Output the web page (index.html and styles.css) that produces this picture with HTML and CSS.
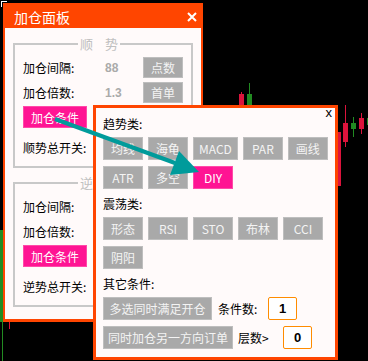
FILE: index.html
```html
<!DOCTYPE html>
<html lang="zh-CN">
<head>
    <meta charset="UTF-8">
    <title>加仓面板</title>
    <link rel="stylesheet" href="styles.css">
</head>
<body>
    <!-- 背景K线 -->
    <div class="chart">
        <i class="corner"></i>
        <i class="wick red" style="left:241px;top:92px;height:14px"></i>
        <i class="bar red" style="left:239px;top:94px;height:12px"></i>
        <i class="wick green" style="left:249px;top:83px;height:23px"></i>
        <i class="bar green" style="left:247px;top:94px;height:12px"></i>
        <i class="bar red" style="left:336px;top:132px;height:54px"></i>
        <i class="wick red" style="left:345px;top:105px;height:42px"></i>
        <i class="bar red" style="left:343px;top:123px;height:19px"></i>
        <i class="wick green" style="left:353px;top:117px;height:20px"></i>
        <i class="bar green" style="left:351px;top:123px;height:6px"></i>
        <i class="wick red" style="left:361px;top:113px;height:21px"></i>
        <i class="bar red" style="left:359px;top:118px;height:11px"></i>
        <i class="bar green" style="left:367px;top:118px;height:7px"></i>
        <i class="bar green" style="left:0;top:230px;height:92px;width:3px"></i>
        <i class="wick green" style="left:2px;top:230px;height:131px"></i>
        <i class="wick red" style="left:9px;top:322px;height:7px"></i>
    </div>

    <div class="panel">
        <div class="head">
            <span>加仓面板</span>
            <svg width="10" height="10" viewBox="0 0 10 10"><path d="M1 1L9 9M9 1L1 9" stroke="#fff" stroke-width="2"/></svg>
        </div>
        <div class="main">
            <div class="group">
                <div class="legend"><span>顺</span><span>势</span></div>
                <div class="row"><span class="label">加仓间隔:</span><span class="val">88</span><span class="btn">点数</span></div>
                <div class="row"><span class="label">加仓倍数:</span><span class="val">1.3</span><span class="btn">首单</span></div>
                <div class="btn pink add">加仓条件</div>
                <div class="switch">顺势总开关:</div>
            </div>
            <div class="group">
                <div class="legend"><span>逆</span><span>势</span></div>
                <div class="row"><span class="label">加仓间隔:</span></div>
                <div class="row"><span class="label">加仓倍数:</span></div>
                <div class="btn pink add">加仓条件</div>
                <div class="switch">逆势总开关:</div>
            </div>
        </div>
    </div>

    <!-- 条件弹窗 -->
    <div class="pop">
        <span class="close">x</span>
        <div class="title">趋势类:</div>
        <div class="btns">
            <span class="btn">均线</span><span class="btn">海龟</span><span class="btn">MACD</span><span class="btn">PAR</span><span class="btn">画线</span>
        </div>
        <div class="btns">
            <span class="btn">ATR</span><span class="btn">多空</span><span class="btn pink">DIY</span>
        </div>
        <div class="title">震荡类:</div>
        <div class="btns">
            <span class="btn">形态</span><span class="btn">RSI</span><span class="btn">STO</span><span class="btn">布林</span><span class="btn">CCI</span>
        </div>
        <div class="btns">
            <span class="btn">阴阳</span>
        </div>
        <div class="title">其它条件:</div>
        <div class="btns">
            <span class="btn multi">多选同时满足开仓</span><span class="field">条件数:</span><span class="num">1</span>
        </div>
        <div class="btns">
            <span class="btn both">同时加仓另一方向订单</span><span class="field layer">层数&gt;</span><span class="num">0</span>
        </div>
    </div>

    <svg class="arrow" width="368" height="361">
        <line x1="55" y1="119" x2="175" y2="163" stroke="#009b9b" stroke-width="4"/>
        <polygon points="199,172 170,175 179,151" fill="#009b9b"/>
    </svg>
</body>
</html>
```

FILE: styles.css
```css
*{
    box-sizing:border-box;
}
body{
    margin:0;
    padding:3px 0 0 3px;
    width:368px;
    height:361px;
    overflow:hidden;
    position:relative;
    background-color:#000;
    font-family:"Noto Sans CJK SC","Liberation Sans",sans-serif;
    font-size:12px;
    color:#000;
}

/* K线 */
.chart{
    position:absolute;
    left:0;
    top:0;
    width:368px;
    height:361px;
}
.chart i{
    position:absolute;
    display:block;
}
.corner{
    left:1px;
    top:1px;
    width:6px;
    height:6px;
    border-left:1px solid #fff;
    border-top:1px solid #fff;
}
.wick{
    width:1px;
}
.bar{
    width:5px;
}
.red{
    background-color:#dc143c;
}
.green{
    background-color:#228b22;
}

/* 左侧面板 */
.panel{
    position:relative;
    width:200px;
    height:319px;
    border:2px solid #ff4500;
    border-bottom-width:3px;
    background-color:#fffafa;
}
.head{
    height:23px;
    background-color:#ff4500;
    color:#fff;
    font-size:14px;
    display:flex;
    align-items:center;
    justify-content:space-between;
    padding:0 4px 0 9px;
}
.main{
    padding:15px 8px 0;
}
.group{
    position:relative;
    height:125px;
    border:2px solid #c8c8c8;
    padding:10px 8px 0;
}
.group + .group{
    margin-top:14px;
}
.legend{
    position:absolute;
    top:-9px;
    left:63px;
    display:flex;
    gap:12px;
    padding:0 2px;
    background-color:#fffafa;
    color:#c0c0c0;
    font-size:13px;
    line-height:16px;
}
.row{
    display:flex;
    align-items:center;
    height:25px;
}
.label{
    width:82px;
}
.val{
    width:38px;
    color:#aaa;
    font-family:"Liberation Sans",sans-serif;
    font-weight:bold;
}
.btn{
    display:flex;
    align-items:center;
    justify-content:center;
    width:40px;
    height:21px;
    background-color:#a9a9a9;
    border:1px solid #bebebe;
    color:#f4f4f4;
    white-space:nowrap;
}
.pink{
    background-color:#ff1493;
    border-color:#ff4aa8;
    color:#fff;
}
.add{
    width:64px;
    height:22px;
    margin-top:1px;
}
.switch{
    display:flex;
    align-items:center;
    height:24px;
    margin-top:7px;
}

/* 弹窗 */
.pop{
    position:absolute;
    left:93px;
    top:105px;
    width:245px;
    height:255px;
    border:3px solid #ff4500;
    background-color:#fffafa;
    padding:7px 0 0 7px;
}
.close{
    position:absolute;
    top:-2px;
    right:3px;
    font-family:"Liberation Sans",sans-serif;
    font-size:13px;
    line-height:14px;
}
.title{
    height:18px;
    line-height:18px;
}
.btns{
    display:flex;
    align-items:center;
    gap:5px;
    margin-top:4px;
}
.btns + .btns{
    margin-top:6px;
}
.btns + .title{
    margin-top:6px;
}
.pop .btn{
    width:auto;
    min-width:40px;
    height:23px;
    padding:0 5px;
}
.pop .multi{
    width:109px;
}
.pop .both{
    width:130px;
}
.field{
    width:40px;
    margin-left:1px;
}
.layer{
    width:35px;
    margin-left:0;
}
.num{
    display:flex;
    align-items:center;
    justify-content:center;
    width:29px;
    height:23px;
    margin-left:5px;
    border:1px solid #ff8c00;
    border-radius:2px;
    background-color:#fff;
    font-family:"Liberation Sans",sans-serif;
    font-size:13px;
    font-weight:bold;
}

/* 箭头 */
.arrow{
    position:absolute;
    left:0;
    top:0;
}
```
